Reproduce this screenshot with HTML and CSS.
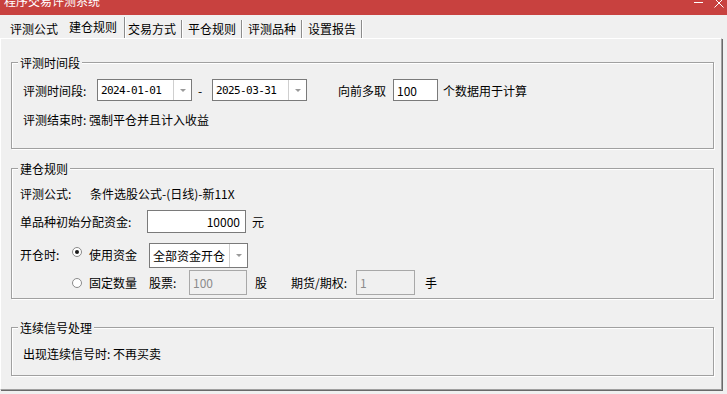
FILE: index.html
```html
<!DOCTYPE html>
<html lang="zh-CN">
<head>
<meta charset="utf-8">
<title>程序交易评测系统</title>
<link rel="stylesheet" href="styles.css">
</head>
<body>
<div class="window">
  <div class="titlebar">
    <span class="title">程序交易评测系统</span>
    <svg class="winctl" width="36" height="15" viewBox="0 0 36 15">
      <line x1="3" y1="2.5" x2="12" y2="2.5" stroke="#fff" stroke-width="1"/>
      <line x1="23.5" y1="-1.5" x2="32.5" y2="7.5" stroke="#fff" stroke-width="1"/>
      <line x1="32.5" y1="-1.5" x2="23.5" y2="7.5" stroke="#fff" stroke-width="1"/>
    </svg>
  </div>

  <div class="tabs">
    <div class="tab first">评测公式</div>
    <div class="tab active">建仓规则</div>
    <div class="tab t3">交易方式</div>
    <div class="tab">平仓规则</div>
    <div class="tab">评测品种</div>
    <div class="tab">设置报告</div>
  </div>

  <div class="panel">
    <fieldset class="group g1">
      <legend>评测时间段</legend>
      <div class="row dates">
        <span class="lbl w74">评测时间段:</span>
        <div class="combo date"><span class="val mono">2024-01-01</span><span class="btn"><i class="arrow"></i></span></div>
        <span class="dash">-</span>
        <div class="combo date"><span class="val mono">2025-03-31</span><span class="btn"><i class="arrow"></i></span></div>
        <span class="lbl pre">向前多取</span>
        <div class="field n100">100</div>
        <span class="suf">个数据用于计算</span>
      </div>
      <div class="row text end">评测结束时: 强制平仓并且计入收益</div>
    </fieldset>

    <fieldset class="group g2">
      <legend>建仓规则</legend>
      <div class="row text formula">
        <span class="lbl w70">评测公式:</span>
        <span>条件选股公式-(日线)-新11X</span>
      </div>
      <div class="row money">
        <span class="lbl w127">单品种初始分配资金:</span>
        <div class="field amount">10000</div>
        <span class="unit-yuan">元</span>
      </div>
      <div class="row open">
        <span class="lbl w52 mt3">开仓时:</span>
        <span class="radio on mt4"></span>
        <span class="mt3">使用资金</span>
        <div class="combo fund"><span class="val">全部资金开仓</span><span class="btn"><i class="arrow"></i></span></div>
      </div>
      <div class="row fixed">
        <span class="radio"></span>
        <span>固定数量</span>
        <span class="lbl w40 stock-lbl">股票:</span>
        <div class="field disabled stock">100</div>
        <span class="unit-gu">股</span>
        <span class="lbl w65 fut-lbl">期货/期权:</span>
        <div class="field disabled fut">1</div>
        <span class="unit-shou">手</span>
      </div>
    </fieldset>

    <fieldset class="group g3">
      <legend>连续信号处理</legend>
      <div class="row text signal">出现连续信号时: 不再买卖</div>
    </fieldset>
  </div>
</div>
</body>
</html>
```

FILE: styles.css
```css
html, body {
  margin: 0;
  padding: 0;
  background: #f0f0f0;
}
body {
  width: 727px;
  height: 394px;
  overflow: hidden;
  font-family: "Noto Sans CJK SC", "Microsoft YaHei", sans-serif;
  font-size: 12px;
  color: #000;
}

/* title bar */
.titlebar {
  height: 15px;
  background: #c8413f;
  display: flex;
  align-items: flex-end;
  justify-content: space-between;
  overflow: hidden;
}
.title {
  color: #fff;
  font-size: 12px;
  line-height: 14px;
  padding-left: 4px;
  margin-bottom: 7px;
  white-space: nowrap;
}
.winctl {
  align-self: flex-start;
  display: block;
}

/* tabs */
.tabs {
  height: 23px;
  display: flex;
  align-items: flex-end;
  padding-left: 5px;
}
.tab {
  height: 18px;
  line-height: 18px;
  padding: 0 5px 0 6px;
  border-right: 1px solid #8c8c8c;
  box-shadow: 1px 0 0 #fff;
  white-space: nowrap;
}
.tab.first {
  padding: 0 4px 0 5px;
  border-right: 0;
  box-shadow: none;
}
.tab.active {
  height: 20px;
  padding: 1px 7px 0 7px;
  line-height: 18px;
}
.tab.t3 {
  padding: 0 5px 0 3px;
}

/* panel */
.panel {
  width: 722px;
  height: 352px;
  box-sizing: border-box;
  border-top: 1px solid #fff;
  border-left: 1px solid #fff;
  border-right: 1px solid #a0a0a0;
  border-bottom: 1px solid #a0a0a0;
  box-shadow: 1px 1px 0 #696969;
}

/* group boxes */
.group {
  box-sizing: border-box;
  width: 703px;
  min-width: 0;
  margin: 0 0 0 10px;
  padding: 0;
  border: 1px solid #a0a0a0;
  box-shadow: 1px 1px 0 #fff, inset 1px 1px 0 #fff;
}
.group legend {
  margin-left: 6px;
  padding: 0 2px;
  line-height: 15px;
  background: #f0f0f0;
}
.g1 { margin-top: 16px; height: 94px; }
.g2 { margin-top: 12px; height: 138px; }
.g3 { margin-top: 21px; height: 56px; }

.row {
  display: flex;
  align-items: center;
  white-space: nowrap;
}
.text { line-height: 14px; }

.lbl { display: inline-block; }
.w74 { width: 74px; }
.w70 { width: 70px; }
.w127 { width: 127px; }
.w52 { width: 52px; }
.w40 { width: 40px; }
.w65 { width: 65px; }
.mt3 { margin-top: 3px; }
.mt4 { margin-top: 4px; }

/* group 1 */
.dates {
  margin-top: 9px;
  height: 22px;
  padding-left: 11px;
}
.dash {
  width: 20px;
  padding-left: 6px;
  box-sizing: border-box;
}
.pre {
  margin-left: 31px;
  width: 55px;
}
.suf { margin-left: 5px; }
.end {
  margin-top: 12px;
  padding-left: 11px;
}

/* controls */
.combo {
  box-sizing: border-box;
  display: flex;
  border: 1px solid #7a7a7a;
  background: #fff;
}
.combo .val {
  flex: 1;
  padding-left: 3px;
  display: flex;
  align-items: center;
  overflow: hidden;
}
.combo .btn {
  width: 18px;
  box-sizing: border-box;
  border-left: 1px solid #cfcfcf;
  display: flex;
  align-items: center;
  justify-content: center;
}
.arrow {
  width: 0;
  height: 0;
  border-left: 3px solid transparent;
  border-right: 3px solid transparent;
  border-top: 3px solid #9a9a9a;
}
.date {
  width: 95px;
  height: 22px;
}
.mono {
  font-family: "DejaVu Sans Mono", "Liberation Mono", monospace;
  font-size: 11px;
  letter-spacing: -0.6px;
}
.field {
  box-sizing: border-box;
  border: 1px solid #7a7a7a;
  background: #fff;
  display: flex;
  align-items: center;
  padding-left: 3px;
}
.n100 {
  width: 45px;
  height: 22px;
}

/* group 2 */
.formula {
  margin-top: 11px;
  padding-left: 8px;
}
.money {
  margin-top: 9px;
  height: 23px;
  padding-left: 8px;
}
.amount {
  width: 99px;
  height: 23px;
  justify-content: flex-end;
  padding: 0 5px 0 0;
}
.unit-yuan { margin-left: 6px; }

.open {
  margin-top: 10px;
  height: 25px;
  padding-left: 8px;
  align-items: flex-start;
}
.fund {
  width: 99px;
  height: 25px;
  margin-left: 12px;
}

.radio {
  box-sizing: border-box;
  width: 10px;
  height: 10px;
  border-radius: 50%;
  border: 1px solid #8a8a8a;
  background: #fff;
  margin-right: 7px;
  display: flex;
  align-items: center;
  justify-content: center;
}
.radio.on::after {
  content: "";
  width: 4px;
  height: 4px;
  border-radius: 50%;
  background: #1a1a1a;
}

.fixed {
  margin-top: 2px;
  height: 25px;
  padding-left: 60px;
}
.stock-lbl { margin-left: 12px; }
.disabled {
  background: #f0f0f0;
  border-color: #a8a8a8;
  color: #8c8c8c;
}
.stock {
  width: 58px;
  height: 25px;
}
.unit-gu { margin-left: 8px; }
.fut-lbl { margin-left: 24px; }
.fut {
  width: 59px;
  height: 25px;
}
.unit-shou { margin-left: 10px; }

/* group 3 */
.signal {
  margin-top: 12px;
  padding-left: 11px;
}
```
